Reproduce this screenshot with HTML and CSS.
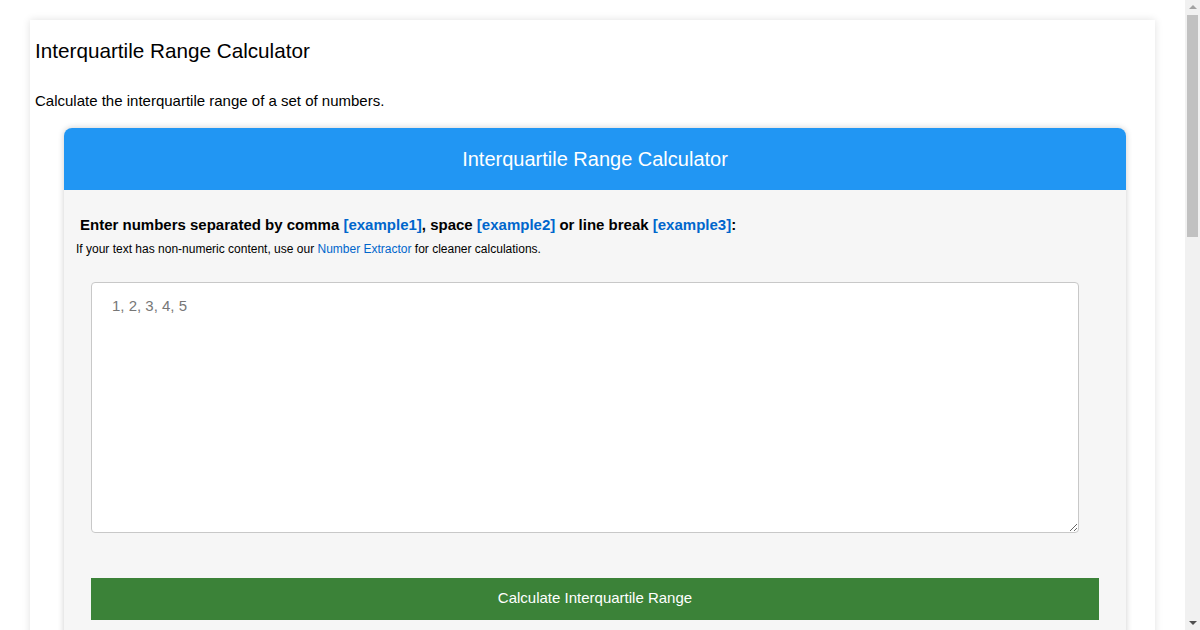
FILE: index.html
```html
<!DOCTYPE html>
<html lang="en">
<head>
<meta charset="utf-8">
<title>Interquartile Range Calculator</title>
<link rel="stylesheet" href="styles.css">
</head>
<body>
<div class="page">
  <h1 class="page-title">Interquartile Range Calculator</h1>
  <p class="page-desc">Calculate the interquartile range of a set of numbers.</p>
  <div class="card">
    <div class="card-header">Interquartile Range Calculator</div>
    <div class="card-body">
      <label class="input-label" for="nums">Enter numbers separated by comma <a href="#">[example1]</a>, space <a href="#">[example2]</a> or line break <a href="#">[example3]</a>:</label>
      <p class="hint">If your text has non-numeric content, use our <a href="#">Number Extractor</a> for cleaner calculations.</p>
      <textarea id="nums" class="nums" placeholder="1, 2, 3, 4, 5"></textarea>
      <button class="calc-btn" type="button">Calculate Interquartile Range</button>
      <div class="results">
        <h2 class="results-title">Results</h2>
        <p class="results-text">Enter a set of numbers above and press the button to see the first quartile, the third quartile and the interquartile range.</p>
      </div>
    </div>
  </div>
  <div class="about">
    <h2>What is the interquartile range?</h2>
    <p>The interquartile range (IQR) is the difference between the third quartile (Q3) and the first quartile (Q1) of a data set. It measures the spread of the middle 50% of the values.</p>
    <h2>How to calculate it</h2>
    <p>Sort the numbers, find the median of the lower half (Q1) and the median of the upper half (Q3), then subtract Q1 from Q3.</p>
  </div>
</div>
<div class="scrollbar" aria-hidden="true">
  <span class="sb-arrow sb-up"></span>
  <span class="sb-thumb"></span>
  <span class="sb-arrow sb-down"></span>
</div>
</body>
</html>
```
FILE: styles.css
```css
html, body {
  margin: 0;
  padding: 0;
  background: #ffffff;
}
body {
  font-family: "Liberation Sans", Arial, sans-serif;
  color: #000;
  padding: 20px 45px 20px 30px;
}
.page {
  background: #fff;
  box-shadow: 0 0 8px rgba(0,0,0,0.12);
  padding: 1px 5px 40px 5px;
  min-height: 1600px;
}
.page-title {
  font-size: 20.7px;
  font-weight: normal;
  margin: 18px 0 0 0;
  line-height: 24px;
}
.page-desc {
  font-size: 15px;
  margin: 28px 0 0 0;
  line-height: 20px;
}
.card {
  margin: 17px 24px 0 29px;
  border-radius: 8px;
  box-shadow: 0 0 6px rgba(0,0,0,0.2);
  background: #f6f6f6;
  overflow: hidden;
}
.card-header {
  background: #2196f3;
  color: #fff;
  text-align: center;
  font-size: 20px;
  height: 62px;
  line-height: 62px;
}
.card-body {
  padding: 25px 27px 30px 12px;
}
.input-label {
  display: block;
  font-weight: bold;
  font-size: 15px;
  padding-left: 4px;
  line-height: 20px;
}
.input-label a, .hint a {
  color: #0066cc;
  text-decoration: none;
}
.input-label a {
  font-weight: bold;
}
.hint {
  font-size: 12px;
  margin: 6px 0 0 0;
  line-height: 16px;
}
.nums {
  display: block;
  box-sizing: border-box;
  width: 988px;
  height: 251px;
  margin: 25px 0 0 15px;
  padding: 13px 20px;
  border: 1px solid #c8c8c8;
  border-radius: 4px;
  background: #fff;
  font-family: "Liberation Sans", Arial, sans-serif;
  font-size: 15px;
  line-height: 20px;
  resize: vertical;
}
.nums::placeholder {
  color: #777;
}
.calc-btn {
  display: block;
  box-sizing: border-box;
  width: calc(100% - 15px);
  height: 42px;
  margin: 45px 0 0 15px;
  padding: 0 0 3px 0;
  background: #3b8238;
  color: #fff;
  border: none;
  font-family: "Liberation Sans", Arial, sans-serif;
  font-size: 15px;
  line-height: 20px;
  cursor: pointer;
}
.results {
  margin: 30px 0 0 15px;
}
.results-title {
  font-size: 18px;
  margin: 0 0 10px 0;
}
.results-text {
  font-size: 14px;
  margin: 0;
}
.about {
  margin: 30px 29px 0 29px;
  font-size: 15px;
}
.about h2 {
  font-size: 18px;
}

/* simulated browser scrollbar */
.scrollbar {
  position: fixed;
  top: 0;
  right: 0;
  width: 15px;
  height: 100vh;
  background: #f1f1f1;
  display: flex;
  flex-direction: column;
  align-items: center;
}
.sb-arrow {
  flex: none;
  width: 0;
  height: 0;
  border-left: 4px solid transparent;
  border-right: 4px solid transparent;
}
.sb-up {
  margin-top: 5px;
  border-bottom: 4px solid #a3a3a3;
}
.sb-thumb {
  flex: none;
  width: 11px;
  height: 222px;
  margin-top: 6px;
  background: #c1c1c1;
}
.sb-down {
  margin-top: auto;
  margin-bottom: 5px;
  border-top: 4px solid #505050;
}
```
